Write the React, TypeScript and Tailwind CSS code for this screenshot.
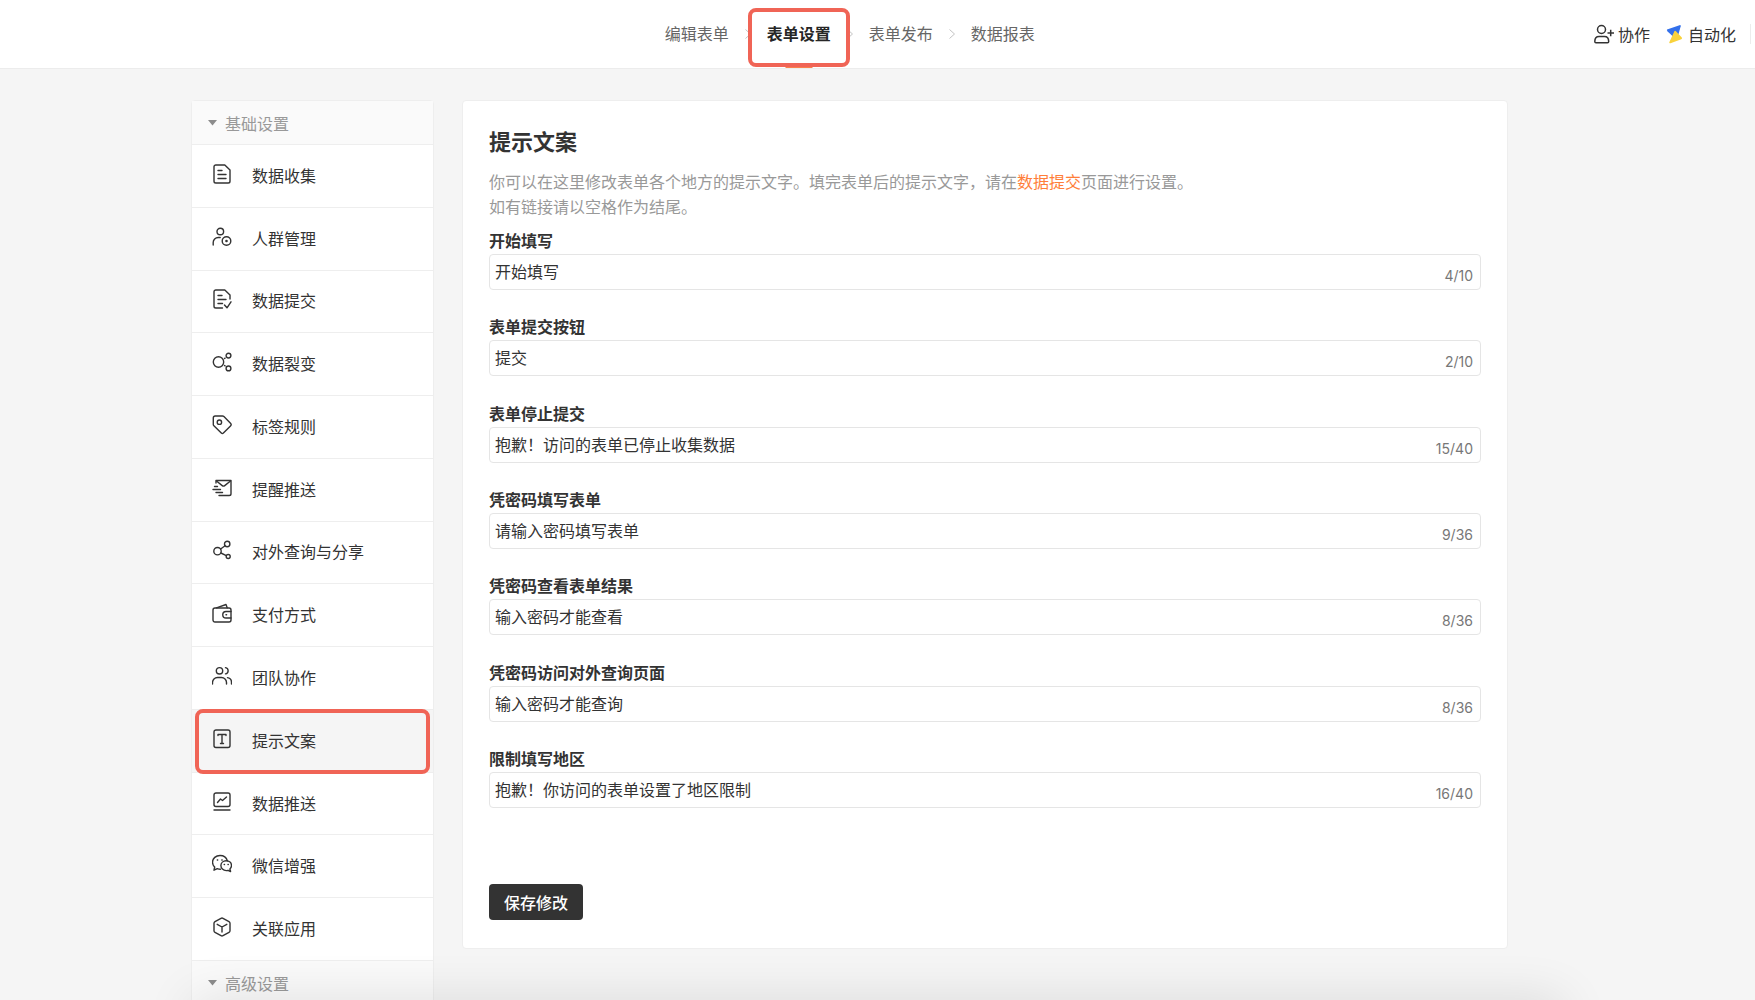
import { useState, type ReactNode } from "react";

type MenuItem = {
  label: string;
  icon: ReactNode;
};

type Field = {
  id: string;
  label: string;
  value: string;
  max: number;
};

const steps = ["编辑表单", "表单设置", "表单发布", "数据报表"];
const activeStep = "表单设置";
const activeMenu = "提示文案";

const menuItems: MenuItem[] = [
  {
    label: "数据收集",
    icon: (
      <>
        <path d="M3.8 1h9L18 6v11.2a1.8 1.8 0 0 1-1.8 1.8H3.8A1.8 1.8 0 0 1 2 17.2V2.8A1.8 1.8 0 0 1 3.8 1z" />
        <path d="M6 6.5h4M6 10.5h8M6 14.5h8" />
      </>
    ),
  },
  {
    label: "人群管理",
    icon: (
      <>
        <circle cx="8.3" cy="4.5" r="3.3" />
        <path d="M1.2 18v-2.5a5 5 0 0 1 5-5h2" />
        <circle cx="14.5" cy="14" r="4.3" />
        <circle cx="14.5" cy="14" r="0.6" fill="currentColor" />
      </>
    ),
  },
  {
    label: "数据提交",
    icon: (
      <>
        <path d="M10.5 19H3.8A1.8 1.8 0 0 1 2 17.2V2.8A1.8 1.8 0 0 1 3.8 1h9L18 6v4" />
        <path d="M6 6.5h4M6 10.5h8M6 14.5h4.5M12.5 16l2.5 2.8 4-6" />
      </>
    ),
  },
  {
    label: "数据裂变",
    icon: (
      <>
        <circle cx="6.5" cy="10" r="5.2" />
        <circle cx="16.5" cy="3.6" r="2.4" />
        <circle cx="16.5" cy="16.4" r="2.4" />
        <path d="M12.5 6.5l.6-.4M12.5 13.5l.6.4" />
      </>
    ),
  },
  {
    label: "标签规则",
    icon: (
      <>
        <path d="M3.2 1h7.3a2 2 0 0 1 1.4.6l6.6 6.6a2 2 0 0 1 0 2.8l-7.1 7.1a1.5 1.5 0 0 1-2.1 0L1.9 10.8a2 2 0 0 1-.6-1.4V3a2 2 0 0 1 1.9-2z" />
        <circle cx="7.4" cy="7.2" r="2.2" />
      </>
    ),
  },
  {
    label: "提醒推送",
    icon: (
      <>
        <path d="M4 5V2.5h15v13.2a1.8 1.8 0 0 1-1.8 1.8H7" />
        <path d="M4.5 3l5.7 4.6a2 2 0 0 0 2.5 0L18.5 3M2.5 8.5h3M1 11.5h7.5M4 14.5h6.5" />
      </>
    ),
  },
  {
    label: "对外查询与分享",
    icon: (
      <>
        <circle cx="5.5" cy="11.2" r="3.7" />
        <circle cx="15.2" cy="4" r="2.7" />
        <circle cx="16.2" cy="16.5" r="2" />
        <path d="M8.6 9l4.5-3.3M8.9 13l5.4 2.6" />
      </>
    ),
  },
  {
    label: "支付方式",
    icon: (
      <>
        <rect x="1" y="5" width="18" height="14" rx="2" />
        <path d="M4.5 4.8L14 1.5l1.2 3.3M19 8.5h-5a3.2 3.2 0 0 0 0 6.5h5M14 11.7h.6" />
      </>
    ),
  },
  {
    label: "团队协作",
    icon: (
      <>
        <circle cx="7.5" cy="4.8" r="3.2" />
        <path d="M.5 18v-1.5a5 5 0 0 1 5-5h4a5 5 0 0 1 5 5V18M13.5 1.6a3.2 3.2 0 0 1 0 6.3M15.5 11.6a4.8 4.8 0 0 1 4 4.9V18" />
      </>
    ),
  },
  {
    label: "提示文案",
    icon: (
      <>
        <rect x="2" y="1" width="16" height="17.5" rx="2" />
        <path d="M6 6.5v-1h8v1M10 5.5v9M8.5 14.5h3" />
      </>
    ),
  },
  {
    label: "数据推送",
    icon: (
      <>
        <rect x="2" y="1" width="16" height="13.5" rx="2" />
        <path d="M5.5 10.5L8.5 7l2 1.5 4-3.5M2 18h16" />
      </>
    ),
  },
  {
    label: "微信增强",
    icon: (
      <>
        <path d="M8.5 15.2c-1.2 0-2.2-.2-3.2-.6L2 16.2l.7-3.2A6.8 6.8 0 0 1 .5 8.2C.5 4.3 4 1.5 8 1.5c3.5 0 6.5 2.1 7.3 5.2" />
        <path d="M14.2 6.8c3 0 5.3 2 5.3 4.7 0 1.4-.6 2.6-1.6 3.5l.7 2.5-2.6-1.2c-.6.2-1.2.3-1.8.3-3 0-5.3-2.3-5.3-5s2.3-4.8 5.3-4.8z" />
        <path d="M5.3 6h.4M9.8 6h.4M12.2 10.5h.3M16 10.5h.3" />
      </>
    ),
  },
  {
    label: "关联应用",
    icon: (
      <>
        <path d="M9 1.3a2 2 0 0 1 2 0l6 3.3a2 2 0 0 1 1 1.8v7.2a2 2 0 0 1-1 1.8l-6 3.3a2 2 0 0 1-2 0l-6-3.3a2 2 0 0 1-1-1.8V6.4a2 2 0 0 1 1-1.8z" />
        <path d="M5.2 7.3L10 10l4.8-2.7M10 10v5" />
      </>
    ),
  },
];

const initialFields: Field[] = [
  { id: "start", label: "开始填写", value: "开始填写", max: 10 },
  { id: "submit", label: "表单提交按钮", value: "提交", max: 10 },
  { id: "closed", label: "表单停止提交", value: "抱歉！访问的表单已停止收集数据", max: 40 },
  { id: "fill-password", label: "凭密码填写表单", value: "请输入密码填写表单", max: 36 },
  { id: "result-password", label: "凭密码查看表单结果", value: "输入密码才能查看", max: 36 },
  { id: "query-password", label: "凭密码访问对外查询页面", value: "输入密码才能查询", max: 36 },
  { id: "region", label: "限制填写地区", value: "抱歉！你访问的表单设置了地区限制", max: 40 },
];

function Icon({ children }: { children: ReactNode }) {
  return (
    <svg
      viewBox="0 0 20 20"
      className="h-5 w-5 shrink-0"
      fill="none"
      stroke="currentColor"
      strokeWidth="1.4"
      strokeLinecap="round"
      strokeLinejoin="round"
      aria-hidden="true"
    >
      {children}
    </svg>
  );
}

function Header() {
  return (
    <header className="grid h-[69px] shrink-0 grid-cols-[12fr_auto_13fr] border-b border-[#ececec] bg-white">
      <nav className="col-start-2 flex items-stretch">
        {steps.map((step, index) => (
          <div key={step} className="flex items-stretch">
            {index > 0 && (
              <span className="flex w-[38px] items-center justify-center text-[#c4c4c4]">
                <svg viewBox="0 0 6 10" className="h-[10px] w-[6px]" fill="none" stroke="currentColor" aria-hidden="true">
                  <path d="M.5.5L5.5 5l-5 4.5" />
                </svg>
              </span>
            )}
            <a
              href="#"
              className={`relative flex items-center pb-0.5 ${
                step === activeStep ? "font-bold text-[#262626]" : "text-[#666]"
              }`}
            >
              {step}
              {step === activeStep && (
                <>
                  <span className="absolute bottom-0 left-1/2 h-[3px] w-[27px] -translate-x-1/2 bg-[#fa7f4b]" />
                  <span className="absolute -inset-x-[19px] top-2 bottom-px rounded-lg border-4 border-[#f06456]" />
                </>
              )}
            </a>
          </div>
        ))}
      </nav>

      <div className="flex items-center justify-end gap-4 pr-1 text-[#333]">
        <a href="#" className="flex items-center gap-1">
          <svg viewBox="0 0 20 20" className="h-5 w-5" fill="none" stroke="currentColor" strokeWidth="1.5" aria-hidden="true">
            <circle cx="7.5" cy="5.5" r="4" />
            <path d="M.8 17.5c0-3 1.5-5 4.2-5h5.5c2.7 0 4.2 2 4.2 5 0 .8-.4 1.300-1.200 1.300H2c-.8 0-1.200-.5-1.200-1.300zM13.500 9H20M16.700 5.800v6.400" />
          </svg>
          协作
        </a>
        <div className="flex items-center gap-3.5">
          <a href="#" className="flex items-center gap-1">
            <svg viewBox="0 0 18 20" className="h-5 w-[18px]" aria-hidden="true">
              <path d="M1 5.500L13.500 1.200q1.500-.4 1.200 1.100L12 12H6.500L1.600 7.500Q.5 6.200 1 5.500z" fill="#3370eb" />
              <path d="M8.500 7q.8-.8 1.500.2l5.800 6.300q.8 1.200-.5 1.700L4.500 19.200q-1.500.5-1.200-1z" fill="#f9d23c" />
            </svg>
            自动化
          </a>
          <span className="h-5 w-px bg-[#ececec]" />
        </div>
      </div>
    </header>
  );
}

function GroupTitle({ children }: { children: ReactNode }) {
  return (
    <button type="button" className="flex h-[43px] w-full items-center gap-2 bg-[#fafafa] px-4 text-[#999]">
      <svg viewBox="0 0 9 6" className="h-[6px] w-[9px]" fill="#8c8c8c" aria-hidden="true">
        <path d="M0 0h9L4.500 5.500z" />
      </svg>
      {children}
    </button>
  );
}

function Sidebar() {
  return (
    <aside className="w-[243px] shrink-0 rounded-t border border-[#eee] bg-white">
      <GroupTitle>基础设置</GroupTitle>
      <ul className="grid min-h-[816px] auto-rows-fr">
        {menuItems.map((item) => (
          <li key={item.label} className="relative border-t border-[#eee]">
            <a
              href="#"
              className={`flex h-full items-center gap-5 px-5 pb-0.5 text-[#333] ${
                item.label === activeMenu ? "bg-[#f5f5f5]" : ""
              }`}
            >
              <span className="pb-0.5">
                <Icon>{item.icon}</Icon>
              </span>
              {item.label}
            </a>
            {item.label === activeMenu && (
              <span className="pointer-events-none absolute inset-x-[3px] -top-px -bottom-0.5 z-10 rounded-lg border-4 border-[#f06456]" />
            )}
          </li>
        ))}
      </ul>
      <div className="border-t border-[#eee]">
        <GroupTitle>高级设置</GroupTitle>
      </div>
    </aside>
  );
}

function PromptSettings() {
  const [fields, setFields] = useState(initialFields);

  const updateField = (id: string, value: string) => {
    setFields(fields.map((field) => (field.id === id ? { ...field, value } : field)));
  };

  return (
    <main className="flex-1 rounded border border-[#eee] bg-white px-[26px] pt-[23px] pb-7">
      <h1 className="text-[22px] leading-8 font-bold text-[#333]">提示文案</h1>
      <p className="mt-[13px] leading-[25px] text-[#999]">
        你可以在这里修改表单各个地方的提示文字。填完表单后的提示文字，请在
        <a href="#" className="text-[#ff7e39]">数据提交</a>
        页面进行设置。
        <br />
        如有链接请以空格作为结尾。
      </p>

      <form className="mt-[9px]" onSubmit={(event) => event.preventDefault()}>
        <div className="grid min-h-[580px] content-between">
          {fields.map((field) => (
            <div key={field.id}>
              <label htmlFor={field.id} className="mb-0.5 block leading-6 font-bold text-[#333]">
                {field.label}
              </label>
              <div className="flex h-9 rounded border border-[#e5e5e5] pr-[7px] pl-[5px]">
                <input
                  id={field.id}
                  type="text"
                  className="min-w-0 flex-1 pb-0.5 text-[#333] outline-none"
                  value={field.value}
                  maxLength={field.max}
                  onChange={(event) => updateField(field.id, event.target.value)}
                />
                <span className="self-end pb-[3px] font-[Inter] text-sm text-[#777]">
                  {field.value.length}/{field.max}
                </span>
              </div>
            </div>
          ))}
        </div>
        <button type="submit" className="mt-[76px] block h-9 rounded bg-[#333] px-[15px] font-medium text-white">
          保存修改
        </button>
      </form>
    </main>
  );
}

export default function App() {
  return (
    <div className="flex h-screen flex-col overflow-hidden bg-[#f5f5f5] font-['Noto_Sans_CJK_SC',sans-serif] text-base">
      <Header />
      <div className="flex items-start gap-7 pt-[31px] pr-[247px] pl-[191px]">
        <Sidebar />
        <PromptSettings />
      </div>

      {/* shadow of the floating bar that sits just below the fold */}
      <div className="pointer-events-none fixed inset-x-48 -bottom-10 h-10 shadow-[0_0_50px_rgba(0,0,0,0.12)]" />
    </div>
  );
}
